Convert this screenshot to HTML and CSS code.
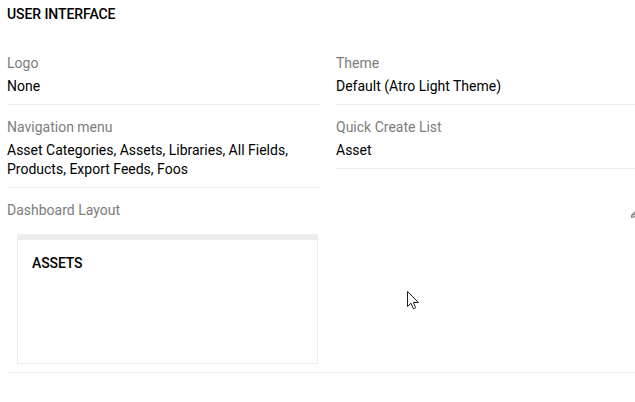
FILE: index.html
```html
<!DOCTYPE html>
<html lang="en">
<head>
<meta charset="utf-8">
<title>User Interface</title>
<link rel="stylesheet" href="styles.css">
</head>
<body>
<main class="panel">
  <h1 class="panel-title">USER INTERFACE</h1>
  <div class="grid">
    <div class="cell"><div class="label">Logo</div><div class="value">None</div></div>
    <div class="cell"><div class="label">Theme</div><div class="value">Default (Atro Light Theme)</div></div>
    <div class="cell"><div class="label">Navigation menu</div><div class="value">Asset Categories, Assets, Libraries, All Fields, Products, Export Feeds, Foos</div></div>
    <div class="cell"><div class="label">Quick Create List</div><div class="value">Asset</div></div>
    <div class="cell wide">
      <div class="label-row">
        <div class="label">Dashboard Layout</div>
        <svg class="edit" width="4" height="7" viewBox="0 0 4 7"><path d="M0.5 6.5 L0.8 4 L4 0.8 M0.5 6.5 L4 5.5 M2 4.6 L4 2.8" fill="none" stroke="#6f777c" stroke-width="1.1"/></svg>
      </div>
      <div class="dashlet"><h2 class="dashlet-title">ASSETS</h2></div>
    </div>
  </div>
</main>
<svg class="cursor" width="14" height="21" viewBox="0 0 14 21"><path d="M1.5 1.5 V16.5 L5 13.2 L7.3 18.7 Q9 19.3 9.6 17.7 L7.4 12.5 H12.4 Z" fill="#fff" stroke="#1c1c28" stroke-width="1"/></svg>
</body>
</html>
```
FILE: styles.css
```css
* { box-sizing: border-box; }
body {
  margin: 0;
  height: 402px;
  overflow: hidden;
  background: #fff;
  color: #000;
  font: 14px/19px Roboto, "Liberation Sans", sans-serif;
}
.panel { padding: 5px 0 0 7px; }
.panel-title, .dashlet-title {
  margin: 0;
  font-size: 14px;
  line-height: 19px;
  font-weight: 500;
}
.panel-title { letter-spacing: -0.08px; }
.grid {
  display: grid;
  grid-template-columns: 313px 313px;
  column-gap: 16px;
  row-gap: 13px;
  align-items: start;
  margin-top: 30px;
}
.cell { padding-bottom: 8px; border-bottom: 1px solid #ebebeb; }
.wide { grid-column: 1 / -1; width: 628px; }
.label { color: #7c7c7c; }
.value { margin-top: 4px; }
.label-row { display: flex; justify-content: space-between; }
.edit { margin-top: 10px; }
.dashlet {
  width: 301px;
  height: 130px;
  margin: 14px 0 0 10px;
  padding: 14px;
  border: 1px solid #ebebeb;
  border-top: 6px solid #ededed;
}
.dashlet-title { letter-spacing: -0.12px; }
.cursor { position: absolute; left: 406px; top: 290px; }
```
